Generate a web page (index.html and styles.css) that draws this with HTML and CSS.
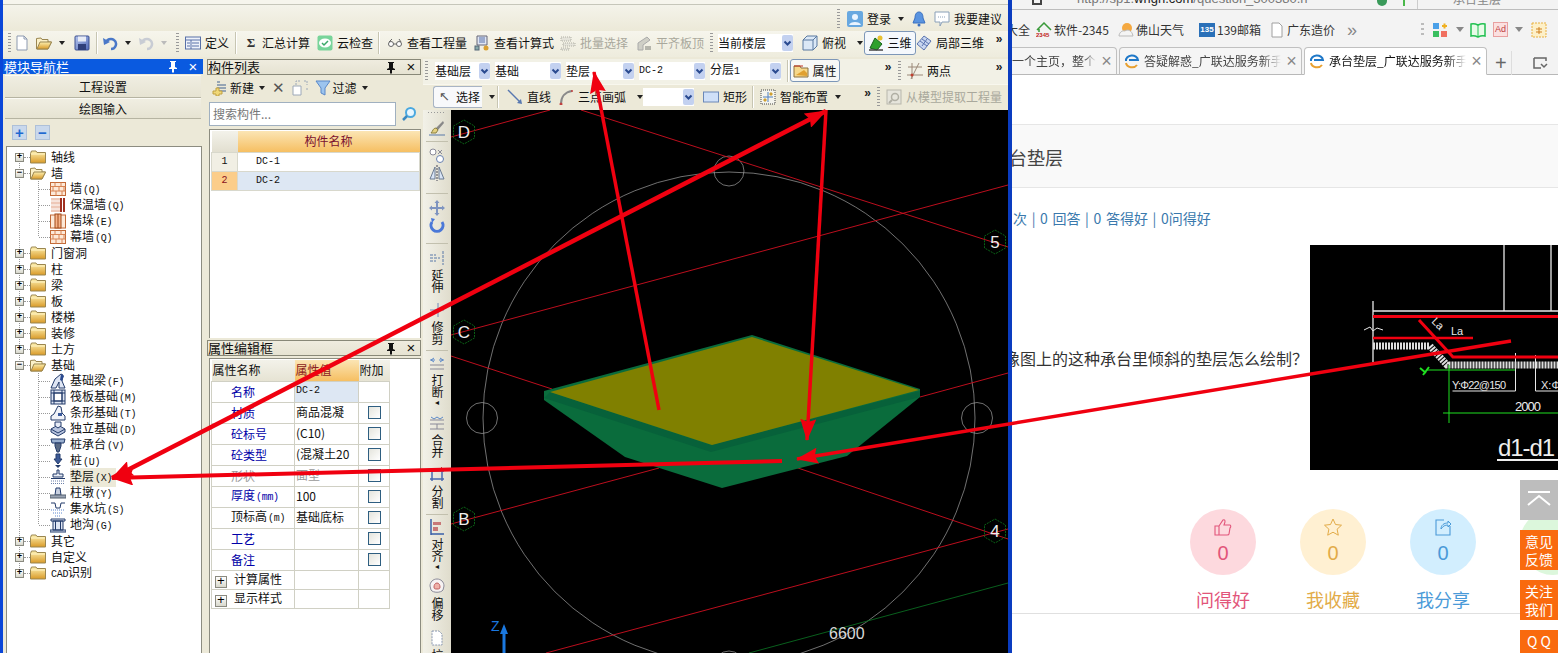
FILE: index.html
```html
<!DOCTYPE html>
<html lang="zh-CN">
<head>
<meta charset="utf-8">
<title>承台垫层</title>
<link rel="stylesheet" href="styles.css">
</head>
<body>
<svg class="sprite" aria-hidden="true">
  <defs>
    <linearGradient id="gf" x1="0" y1="0" x2="0" y2="1"><stop offset="0" stop-color="#fdf0b0"/><stop offset="1" stop-color="#d99a28"/></linearGradient>
    <linearGradient id="gb" x1="0" y1="0" x2="1" y2="1"><stop offset="0" stop-color="#b8c8ee"/><stop offset="1" stop-color="#4f68b8"/></linearGradient>
    <symbol id="pinicon" viewBox="0 0 12 13"><path d="M3 1h6v1H8v5l2 1v1H7v3.500H5V9H2V8l2-1V2H3z" fill="currentColor"/></symbol>
    <symbol id="folder" viewBox="0 0 16 14"><path d="M.5 3.500V13h15V2.500H7L6 1H1.500z" fill="url(#gf)" stroke="#9a8650"/><path d="M1 4h14" stroke="#fff6c8"/></symbol>
    <symbol id="folder-open" viewBox="0 0 16 14"><path d="M.5 2.500V13H12l3.500-7H12V3.500H6L5 2z" fill="#fbf1c8" stroke="#9a8650"/><path d="M1 13l3-7h11.500l-3.500 7z" fill="url(#gf)" stroke="#9a8650"/></symbol>
    <symbol id="wall" viewBox="0 0 16 16"><rect x=".5" y="1.500" width="15" height="13" fill="#fde9d8" stroke="#c26a38"/><path d="M.5 5.500h15M.5 10h15M5 1.500v4M11 1.500v4M3 5.500V10M9 5.500V10M14 5.500V10M6 10v4.500M12 10v4.500" stroke="#d88454" fill="none"/></symbol>
    <symbol id="insul" viewBox="0 0 16 16"><rect x="1" y="1" width="9" height="14" fill="#eec8b8"/><path d="M1 4h9M1 8h9M1 12h9" stroke="#fff"/><rect x="10" y="1" width="5" height="14" fill="#a03020"/><path d="M12.500 1v14" stroke="#fff"/></symbol>
    <symbol id="stub" viewBox="0 0 16 16"><rect x=".5" y="2" width="15" height="13" fill="#fde9d8" stroke="#c26a38"/><rect x="5" y="1" width="6" height="14" fill="#f7b48a" stroke="#a04818"/><path d="M8 1v14" stroke="#a04818"/></symbol>
    <symbol id="beam" viewBox="0 0 16 16"><path d="M1 15l4-9 6-5 2 1-1 6 3 7H9V9l-3 6z" fill="#dfe6f4" stroke="#223a6a"/><path d="M11 1l3 2-2 5-2-1z" fill="#2a4a90"/></symbol>
    <symbol id="raft" viewBox="0 0 16 16"><rect x="1" y="1" width="14" height="14" fill="#dfe6f4" stroke="#223a6a"/><rect x="4" y="4" width="8" height="8" fill="#fff" stroke="#223a6a"/><path d="M1 4h14M1 12h14M4 1v14M12 1v14" stroke="#223a6a"/></symbol>
    <symbol id="strip" viewBox="0 0 16 16"><path d="M1 15V11l3-2 4-8 3 1 1 6 3 3v4z" fill="#f0f2f8" stroke="#223a6a"/><path d="M8 8h4v3H8z" fill="#3a5a9c"/></symbol>
    <symbol id="indep" viewBox="0 0 16 16"><path d="M1 8l7-4 7 4v3l-7 4-7-4z" fill="#b8c4de" stroke="#223a6a"/><path d="M5 5V1h6v4l-3 2z" fill="#e6ebf6" stroke="#223a6a"/><path d="M1 8l7 4 7-4" fill="none" stroke="#223a6a"/></symbol>
    <symbol id="cap" viewBox="0 0 16 16"><path d="M1 2h14l-1 4H2z" fill="#9ab0d0" stroke="#223a6a"/><path d="M5 6h6v3l-2 6H7L5 9z" fill="#5a6a84" stroke="#223a6a"/></symbol>
    <symbol id="pile" viewBox="0 0 16 16"><path d="M6 1h4v5h2l-4 5-4-5h2z" fill="#3d5a96" stroke="#223a6a"/><path d="M5 12h6l-3 3z" fill="#223a6a"/></symbol>
    <symbol id="pad" viewBox="0 0 16 16"><path d="M7 1h2v4h4v3H3V5h4z" fill="#e8ecf4" stroke="#223a6a"/><path d="M1 9.500h14" stroke="#223a6a"/><path d="M1 12h14M1 14.500h14" stroke="#6a7ea8" stroke-dasharray="1 1"/></symbol>
    <symbol id="pier" viewBox="0 0 16 16"><path d="M6 3h4l1 7H5z" fill="#c8d0e0" stroke="#223a6a"/><path d="M0 10h16v3H0z" fill="#9aa4b4" stroke="#55606e"/></symbol>
    <symbol id="sump" viewBox="0 0 16 16"><path d="M1 2h4l1 5h4l1-5h4" fill="none" stroke="#223a6a"/><path d="M1 9l14 0M3 12h10M5 15h6" stroke="#5a86d0" stroke-dasharray="1 1"/></symbol>
    <symbol id="ditch" viewBox="0 0 16 16"><path d="M1 2h14v2H1zM3 4h10v9H3zM0 13h16v2H0z" fill="#dfe6f4" stroke="#223a6a"/><path d="M5.500 4v9M10.500 4v9" stroke="#223a6a"/></symbol>
    <symbol id="chev" viewBox="0 0 11 15"><path d="M2.500 6l3 3 3-3" fill="none" stroke="#2a4a90" stroke-width="2"/></symbol>
    <symbol id="new" viewBox="0 0 16 16"><path d="M3 1h7l3 3v11H3z" fill="#fff" stroke="#8d9ab0"/><path d="M10 1v3h3" fill="none" stroke="#8d9ab0"/></symbol>
    <symbol id="save" viewBox="0 0 16 16"><rect x="1" y="1" width="14" height="14" rx="1" fill="url(#gb)" stroke="#3b4e8e"/><rect x="4" y="1.500" width="8" height="5" fill="#e8ecf6"/><rect x="4" y="9" width="8" height="6" fill="#2f3f7a"/></symbol>
    <symbol id="undo" viewBox="0 0 16 16"><path d="M4 8a5 5 0 0 1 8-3 5 5 0 0 1-3 9" fill="none" stroke="currentColor" stroke-width="2.500"/><path d="M1 3l1 7 6-3z" fill="currentColor"/></symbol>
    <symbol id="def" viewBox="0 0 16 16"><rect x=".5" y="2" width="15" height="12" fill="#eef2fa" stroke="#5870a8"/><path d="M.5 5h15M6 5v9M7 8h7M7 11h7M2 8h3M2 11h3" stroke="#5870a8"/></symbol>
    <symbol id="cloud" viewBox="0 0 16 16"><rect x=".5" y=".5" width="15" height="15" rx="2" fill="#78d49a"/><ellipse cx="8" cy="8" rx="6" ry="4.500" fill="#fff"/><path d="M5 8l2 2 4-4" fill="none" stroke="#3aa868" stroke-width="1.500"/></symbol>
    <symbol id="glasses" viewBox="0 0 16 16"><circle cx="4" cy="9" r="2.500" fill="#fff" stroke="#666"/><circle cx="12" cy="9" r="2.500" fill="#fff" stroke="#666"/><path d="M6.500 9h3M2 7l3-3M14 7l-2-3" fill="none" stroke="#666"/></symbol>
    <symbol id="calc" viewBox="0 0 16 16"><path d="M3 1h10v9H3z" fill="#dfe6f4" stroke="#667"/><path d="M5 3h6M5 5h6M5 7h6" stroke="#5870a8"/><rect x="1" y="11" width="4" height="4" fill="#8aa" stroke="#567"/><circle cx="12" cy="13" r="2.500" fill="#d9a030"/></symbol>
    <symbol id="batch" viewBox="0 0 16 16"><path d="M1 2h10v4H1zM3 8h12v3H3zM1 13h8v2H1z" fill="#e4e3da" stroke="#b0afa4" stroke-dasharray="1 1"/></symbol>
    <symbol id="alignp" viewBox="0 0 16 16"><path d="M2 15V8l9-6 3 3-7 5v5z" fill="#cfcfc6" stroke="#aaa"/><path d="M9 15v-4h6v4z" fill="#b5b5ac"/></symbol>
    <symbol id="cube" viewBox="0 0 16 16"><path d="M1 5l4-4h10v10l-4 4H1z" fill="#dbe8f6" stroke="#5878a0"/><path d="M1 5h10v10M11 5l4-4" fill="none" stroke="#5878a0"/></symbol>
    <symbol id="tri" viewBox="0 0 16 16"><path d="M2 13L7 3l7 6-5 6z" fill="#2ea02e" stroke="#18601a"/><circle cx="12" cy="3" r="2.500" fill="#e8c030"/><path d="M1 15h14" stroke="#444" stroke-width="1.500"/></symbol>
    <symbol id="local3d" viewBox="0 0 16 16"><path d="M1 9l7-8 7 5-7 9z" fill="#c8d6f0" stroke="#5a74b0"/><path d="M4 6l7 5M6 4l7 5M6 11l5-7" stroke="#5a74b0"/></symbol>
    <symbol id="user" viewBox="0 0 16 16"><rect width="16" height="16" rx="2" fill="#68a8e0"/><circle cx="8" cy="6" r="3" fill="#eaf4ff"/><path d="M2 14c1-4 11-4 12 0z" fill="#eaf4ff"/></symbol>
    <symbol id="bell" viewBox="0 0 16 16"><path d="M8 1c3 0 4 3 4 6l2 5H2l2-5c0-3 1-6 4-6z" fill="#5a94e0" stroke="#3a70c0"/><circle cx="8" cy="14" r="1.500" fill="#3a70c0"/></symbol>
    <symbol id="chat" viewBox="0 0 16 16"><path d="M1 1h14v10H8l-2 4v-4H1z" fill="#fff" stroke="#8aa0b8"/><path d="M4 6h8" stroke="#8aa0b8" stroke-dasharray="1 1"/></symbol>
    <symbol id="prop" viewBox="0 0 16 16"><path d="M1 3h6l1 2h7v9H1z" fill="#f6d88a" stroke="#8a7040"/><path d="M3 12l8-5 3 3v3z" fill="#e0a030"/><path d="M1 3h9" stroke="#c03020"/></symbol>
    <symbol id="twopt" viewBox="0 0 16 16"><path d="M0 12h16M1 4h14M5 0v16M12 0L4 16" stroke="#9a8878" fill="none"/><circle cx="5" cy="12" r="1.500" fill="#c04030"/></symbol>
    <symbol id="linei" viewBox="0 0 16 16"><path d="M1 1l12 12" stroke="#5878b0" stroke-width="1.500"/><path d="M15 15l-5-1 4-4z" fill="#5878b0"/></symbol>
    <symbol id="arc" viewBox="0 0 16 16"><path d="M3 15C3 8 7 3 14 2" fill="none" stroke="#8a8a8a" stroke-width="2"/><circle cx="3" cy="15" r="1.500" fill="#c04040"/><circle cx="14" cy="2" r="1" fill="#c04040"/></symbol>
    <symbol id="recti" viewBox="0 0 16 16"><rect x=".5" y="3" width="15" height="10" fill="#cfe0f8" stroke="#6a88b8"/></symbol>
    <symbol id="smart" viewBox="0 0 16 16"><rect x="1" y="1" width="14" height="14" fill="#f4f4ee" stroke="#444" stroke-dasharray="1 1"/><path d="M8 3v10M3 8h10" stroke="#5080c0"/><path d="M11 3l2 2-2 2-2-2zM5 9l2 2-2 2-2-2z" fill="#d0a030"/></symbol>
    <symbol id="extract" viewBox="0 0 16 16"><rect x="1" y="1" width="14" height="14" fill="#e6e5dc" stroke="#b8b7ac"/><circle cx="9" cy="8" r="3.500" fill="none" stroke="#b0afa4" stroke-width="1.500"/><path d="M6 11l-3 3" stroke="#b0afa4" stroke-width="2"/></symbol>
    <symbol id="addi" viewBox="0 0 16 16"><path d="M5 2h3M5 5h9M5 8h9M5 11h9" stroke="#7a8ea8" stroke-width="1.500"/><path d="M4 8v3H1v3h3v2h3v-2h3v-3H7V8z" fill="#f0d878" stroke="#c0a040"/></symbol>
    <symbol id="copy" viewBox="0 0 16 16"><path d="M1 6h8v9H1z" fill="#fff" stroke="#9ca8b8"/><path d="M4 5V1h4M12 1h3v4M15 8v3M4 5" fill="none" stroke="#9ca8b8" stroke-dasharray="2 1"/></symbol>
    <symbol id="filter" viewBox="0 0 16 16"><path d="M1 1h14L10 8v7l-4-2V8z" fill="#9cc4ee" stroke="#5a88c8"/></symbol>
    <symbol id="search" viewBox="0 0 16 16"><circle cx="9.500" cy="6.500" r="4.500" fill="#e8f6ff" stroke="#4aa8e0" stroke-width="2"/><path d="M6 10l-4 4" stroke="#3a88c0" stroke-width="2.500"/></symbol>
    <symbol id="brush" viewBox="0 0 16 16"><path d="M14 1L7 8l2 2 6-7z" fill="#888"/><path d="M7 8c-3 0-3 3-5 5h5l2-3z" fill="#e4d080" stroke="#8a8040"/><path d="M0 15h16" stroke="#5878a8"/></symbol>
    <symbol id="circs" viewBox="0 0 16 16"><circle cx="4" cy="4" r="3" fill="#fff" stroke="#8a8a98"/><circle cx="11" cy="11" r="3.500" fill="#fff" stroke="#6a82b0"/><path d="M9 2l4 4M13 2L9 6" stroke="#8a8a98"/></symbol>
    <symbol id="mirror" viewBox="0 0 16 16"><path d="M6 2L1 14h5zM10 2l5 12h-5z" fill="#d8e4f6" stroke="#6a7a90"/><path d="M8 0v16" stroke="#445" stroke-dasharray="2 1"/></symbol>
    <symbol id="move" viewBox="0 0 16 16"><path d="M8 0l2.500 3H9v4h4V5.500L16 8l-3 2.500V9H9v4h1.500L8 16l-2.500-3H7V9H3v1.500L0 8l3-2.500V7h4V3H5.500z" fill="#7e94c0"/></symbol>
    <symbol id="rot" viewBox="0 0 16 16"><path d="M3 5a6 6 0 1 0 10 0" fill="none" stroke="#4a78d8" stroke-width="3"/><path d="M2 1l4 1-3 4z" fill="#4a78d8"/></symbol>
    <symbol id="ext" viewBox="0 0 16 16"><path d="M14 1v14M1 8h10M1 5h6M1 11h6" stroke="#5878a8" fill="none" stroke-dasharray="3 1"/></symbol>
    <symbol id="trim" viewBox="0 0 16 16"><path d="M9 1v14M1 8h14" stroke="#7088b8" fill="none"/><path d="M1 11h6" stroke="#7088b8"/></symbol>
    <symbol id="brk" viewBox="0 0 16 16"><path d="M1 5h5M10 5h5" stroke="#5a88c8"/><path d="M5 3L2 5l3 2M11 3l3 2-3 2" fill="none" stroke="#5a88c8"/><path d="M1 10h14M1 14h14" stroke="#8a8a98"/></symbol>
    <symbol id="mrg" viewBox="0 0 16 16"><path d="M1 5h14" stroke="#8a8a98"/><path d="M2 2l3 2 3-2M8 2l3 2 3-2" fill="none" stroke="#5a88c8"/><path d="M1 9h14M1 14h14M8 9v5" stroke="#8a8a98"/></symbol>
    <symbol id="spl" viewBox="0 0 16 16"><path d="M1 5h14M1 13h14M3 3v12M13 3v12" stroke="#4a6ab0" stroke-width="1.500"/><path d="M12 1l3 3" stroke="#c04040"/></symbol>
    <symbol id="aln" viewBox="0 0 16 16"><path d="M2 0v16M2 15h13" stroke="#3a60a8" stroke-width="1.500"/><path d="M4 3h8v3H4zM4 8h5v4H4z" fill="#c87878"/></symbol>
    <symbol id="ofs" viewBox="0 0 16 16"><path d="M1 8c0-4 3-7 7-7s7 3 7 7l-1 4c-2 3-10 3-12 0z" fill="#f6f2f2" stroke="#8a8a98"/><path d="M5 9c0-2 1-4 3-4s3 2 3 4-1 2-3 2-3 0-3-2z" fill="#f0b0a8" stroke="#c06060"/></symbol>
    <symbol id="pull" viewBox="0 0 16 16"><path d="M3 1h7l3 3v11H3z" fill="#fff" stroke="#8a98b0" stroke-dasharray="2 1"/></symbol>
  </defs>
</svg>

<div class="app">
  <div class="top-strip"></div>
  <div class="login-bar">
    <span class="grip"></span>
    <span class="tool login"><svg class="ic"><use href="#user"/></svg>登录<span class="drop"></span></span>
    <svg class="ic"><use href="#bell"/></svg>
    <span class="tool"><svg class="ic"><use href="#chat"/></svg>我要建议</span>
  </div>

  <div class="main-tb">
    <span class="grip"></span>
    <svg class="ic"><use href="#new"/></svg>
    <span class="tool p4"><svg class="ic"><use href="#folder-open"/></svg><span class="drop"></span></span>
    <svg class="ic ic-p4"><use href="#save"/></svg>
    <span class="sep"></span>
    <span class="tool p4 blue"><svg class="ic"><use href="#undo"/></svg><span class="drop"></span></span>
    <span class="tool p4 faint"><svg class="ic"><use href="#undo"/></svg><span class="drop pale"></span></span>
    <span class="grip grip-far"></span>
    <span class="tool"><svg class="ic"><use href="#def"/></svg>定义</span>
    <span class="sep"></span>
    <span class="tool p8"><b class="sigma">Σ</b>汇总计算</span>
    <span class="tool p2"><svg class="ic"><use href="#cloud"/></svg>云检查</span>
    <span class="sep"></span>
    <span class="tool p7"><svg class="ic"><use href="#glasses"/></svg>查看工程量</span>
    <span class="tool p2"><svg class="ic"><use href="#calc"/></svg>查看计算式</span>
    <span class="tool dim"><svg class="ic"><use href="#batch"/></svg>批量选择</span>
    <span class="tool dim p1"><svg class="ic"><use href="#alignp"/></svg>平齐板顶</span>
    <span class="grip"></span>
    <span class="combo"><span>当前楼层</span><svg class="chev"><use href="#chev"/></svg></span>
    <span class="tool p4"><svg class="ic"><use href="#cube"/></svg>俯视<span class="drop wide"></span></span>
    <span class="tool pressed"><svg class="ic"><use href="#tri"/></svg>三维</span>
    <span class="tool"><svg class="ic"><use href="#local3d"/></svg>局部三维</span>
    <span class="more">»</span>
  </div>

  <div class="main">
    <aside class="nav">
      <header class="pane-title active"><span>模块导航栏</span><span class="pane-ctl"><svg class="pin"><use href="#pinicon"/></svg><i>×</i></span></header>
      <button class="nav-btn">工程设置</button>
      <button class="nav-btn">绘图输入</button>
      <div class="nav-tools">
        <span class="sq">+</span>
        <span class="sq">−</span>
      </div>
      <div class="tree">
        <ul class="tree-list">
          <li class="node"><span class="exp">+</span><i class="dash"></i><svg class="fld"><use href="#folder"/></svg><span>轴线</span></li>
          <li class="node"><span class="exp">−</span><i class="dash"></i><svg class="fld"><use href="#folder-open"/></svg><span>墙</span></li>
          <li>
            <ul class="kids">
              <li class="leaf"><i class="dash2"></i><svg class="lic"><use href="#wall"/></svg><span>墙<em>(Q)</em></span></li>
              <li class="leaf"><i class="dash2"></i><svg class="lic"><use href="#insul"/></svg><span>保温墙<em>(Q)</em></span></li>
              <li class="leaf"><i class="dash2"></i><svg class="lic"><use href="#stub"/></svg><span>墙垛<em>(E)</em></span></li>
              <li class="leaf"><i class="dash2"></i><svg class="lic"><use href="#wall"/></svg><span>幕墙<em>(Q)</em></span></li>
            </ul>
          </li>
          <li class="node"><span class="exp">+</span><i class="dash"></i><svg class="fld"><use href="#folder"/></svg><span>门窗洞</span></li>
          <li class="node"><span class="exp">+</span><i class="dash"></i><svg class="fld"><use href="#folder"/></svg><span>柱</span></li>
          <li class="node"><span class="exp">+</span><i class="dash"></i><svg class="fld"><use href="#folder"/></svg><span>梁</span></li>
          <li class="node"><span class="exp">+</span><i class="dash"></i><svg class="fld"><use href="#folder"/></svg><span>板</span></li>
          <li class="node"><span class="exp">+</span><i class="dash"></i><svg class="fld"><use href="#folder"/></svg><span>楼梯</span></li>
          <li class="node"><span class="exp">+</span><i class="dash"></i><svg class="fld"><use href="#folder"/></svg><span>装修</span></li>
          <li class="node"><span class="exp">+</span><i class="dash"></i><svg class="fld"><use href="#folder"/></svg><span>土方</span></li>
          <li class="node"><span class="exp">−</span><i class="dash"></i><svg class="fld"><use href="#folder-open"/></svg><span>基础</span></li>
          <li>
            <ul class="kids">
              <li class="leaf"><i class="dash2"></i><svg class="lic"><use href="#beam"/></svg><span>基础梁<em>(F)</em></span></li>
              <li class="leaf"><i class="dash2"></i><svg class="lic"><use href="#raft"/></svg><span>筏板基础<em>(M)</em></span></li>
              <li class="leaf"><i class="dash2"></i><svg class="lic"><use href="#strip"/></svg><span>条形基础<em>(T)</em></span></li>
              <li class="leaf"><i class="dash2"></i><svg class="lic"><use href="#indep"/></svg><span>独立基础<em>(D)</em></span></li>
              <li class="leaf"><i class="dash2"></i><svg class="lic"><use href="#cap"/></svg><span>桩承台<em>(V)</em></span></li>
              <li class="leaf"><i class="dash2"></i><svg class="lic"><use href="#pile"/></svg><span>桩<em>(U)</em></span></li>
              <li class="leaf"><i class="dash2"></i><svg class="lic"><use href="#pad"/></svg><span class="hl">垫层<em>(X)</em></span></li>
              <li class="leaf"><i class="dash2"></i><svg class="lic"><use href="#pier"/></svg><span>柱墩<em>(Y)</em></span></li>
              <li class="leaf"><i class="dash2"></i><svg class="lic"><use href="#sump"/></svg><span>集水坑<em>(S)</em></span></li>
              <li class="leaf"><i class="dash2"></i><svg class="lic"><use href="#ditch"/></svg><span>地沟<em>(G)</em></span></li>
            </ul>
          </li>
          <li class="node"><span class="exp">+</span><i class="dash"></i><svg class="fld"><use href="#folder"/></svg><span>其它</span></li>
          <li class="node"><span class="exp">+</span><i class="dash"></i><svg class="fld"><use href="#folder"/></svg><span>自定义</span></li>
          <li class="node"><span class="exp">+</span><i class="dash"></i><svg class="fld"><use href="#folder"/></svg><span><em class="flat">CAD</em>识别</span></li>
        </ul>
      </div>
    </aside>

    <section class="comps">
      <div class="list-pane">
        <header class="pane-title"><span>构件列表</span><span class="pane-ctl"><svg class="pin"><use href="#pinicon"/></svg><i>×</i></span></header>
        <div class="list-tb">
          <span class="tool"><svg class="ic"><use href="#addi"/></svg>新建<span class="drop"></span></span>
          <span class="xmark">✕</span>
          <svg class="ic"><use href="#copy"/></svg>
          <span class="tool"><svg class="ic"><use href="#filter"/></svg>过滤<span class="drop"></span></span>
        </div>
        <div class="search-row">
          <span class="search-box">搜索构件...</span>
          <svg class="ic ic-search"><use href="#search"/></svg>
        </div>
        <div class="list-body">
          <table class="list-table">
            <tr><th class="corner"></th><th class="hot">构件名称</th></tr>
            <tr><td class="num">1</td><td class="name">DC-1</td></tr>
            <tr class="sel"><td class="num">2</td><td class="name">DC-2</td></tr>
          </table>
        </div>
      </div>
      <div class="prop-pane">
        <header class="pane-title"><span>属性编辑框</span><span class="pane-ctl"><svg class="pin"><use href="#pinicon"/></svg><i>×</i></span></header>
        <div class="prop-body">
          <table class="prop-table">
            <tr><th>属性名称</th><th class="hot">属性值</th><th>附加</th></tr>
            <tr><td class="k">名称</td><td class="v cur lat">DC-2</td><td></td></tr>
            <tr><td class="k">材质</td><td class="v">商品混凝</td><td><span class="chk"></span></td></tr>
            <tr><td class="k">砼标号</td><td class="v">(C10)</td><td><span class="chk"></span></td></tr>
            <tr><td class="k">砼类型</td><td class="v">(混凝土20</td><td><span class="chk"></span></td></tr>
            <tr class="off"><td class="k">形状</td><td class="v">面型</td><td><span class="chk"></span></td></tr>
            <tr><td class="k">厚度<em>(mm)</em></td><td class="v">100</td><td><span class="chk"></span></td></tr>
            <tr><td class="k plain">顶标高<em>(m)</em></td><td class="v">基础底标</td><td><span class="chk"></span></td></tr>
            <tr><td class="k">工艺</td><td class="v"></td><td><span class="chk"></span></td></tr>
            <tr><td class="k">备注</td><td class="v"></td><td><span class="chk"></span></td></tr>
            <tr class="grp"><td class="g"><span class="exp boxed">+</span>计算属性</td><td></td><td></td></tr>
            <tr class="grp"><td class="g"><span class="exp boxed">+</span>显示样式</td><td></td><td></td></tr>
          </table>
        </div>
      </div>
    </section>

    <section class="work">
      <div class="tb-a">
        <span class="grip"></span>
        <span class="combo"><span>基础层</span><svg class="chev"><use href="#chev"/></svg></span>
        <span class="combo"><span>基础</span><svg class="chev"><use href="#chev"/></svg></span>
        <span class="combo"><span>垫层</span><svg class="chev"><use href="#chev"/></svg></span>
        <span class="combo"><span class="lat">DC-2</span><svg class="chev"><use href="#chev"/></svg></span>
        <span class="combo"><span>分层<span class="lat">1</span></span><svg class="chev"><use href="#chev"/></svg></span>
        <span class="sep"></span>
        <span class="tool pressed"><svg class="ic"><use href="#prop"/></svg>属性</span>
        <span></span>
        <span class="more">»</span>
        <span class="grip"></span>
        <span class="tool p2"><svg class="ic"><use href="#twopt"/></svg>两点</span>
        <span class="more">»</span>
      </div>
      <div class="tb-b">
        <span></span>
        <span class="tool"><span class="pick"><span class="cursor">↖</span>选择</span><span class="drop"></span></span>
        <span class="sep"></span>
        <span class="tool p7"><svg class="ic"><use href="#linei"/></svg>直线</span>
        <span class="tool p5"><svg class="ic"><use href="#arc"/></svg>三点画弧<span class="drop wide"></span></span>
        <span class="combo combo-m"><span></span><svg class="chev"><use href="#chev"/></svg></span>
        <span class="tool p4"><svg class="ic"><use href="#recti"/></svg>矩形</span>
        <span class="sep"></span>
        <span class="tool p5"><svg class="ic"><use href="#smart"/></svg>智能布置<span class="drop"></span></span>
        <span></span>
        <span class="more">»</span>
        <span class="grip"></span>
        <span class="tool dim p2"><svg class="ic"><use href="#extract"/></svg>从模型提取工程量</span>
      </div>
      <div class="work-body">
        <div class="vtb">
          <span class="vgrip"></span>
          <span class="vt r18"><svg class="ic"><use href="#brush"/></svg></span>
          <span class="vsep"></span>
          <span class="vt r17"><svg class="ic"><use href="#circs"/></svg></span>
          <span class="vt r25"><svg class="ic"><use href="#mirror"/></svg></span>
          <span class="vsep"></span>
          <span class="vt r17"><svg class="ic"><use href="#move"/></svg></span>
          <span class="vt r23"><svg class="ic"><use href="#rot"/></svg></span>
          <span class="vsep"></span>
          <span class="vt r52"><svg class="ic"><use href="#ext"/></svg><b>延伸</b></span>
          <span class="vt r47"><svg class="ic"><use href="#trim"/></svg><b>修剪</b></span>
          <span class="vsep short"></span>
          <span class="vt r60"><svg class="ic"><use href="#brk"/></svg><b>打断</b><s>◂</s></span>
          <span class="vt r51"><svg class="ic"><use href="#mrg"/></svg><b>合并</b></span>
          <span class="vt r47"><svg class="ic"><use href="#spl"/></svg><b>分割</b></span>
          <span class="vsep short"></span>
          <span class="vt r59"><svg class="ic"><use href="#aln"/></svg><b>对齐</b><s>◂</s></span>
          <span class="vt r52"><svg class="ic"><use href="#ofs"/></svg><b>偏移</b></span>
          <span class="vt r52"><svg class="ic"><use href="#pull"/></svg><b>拉</b></span>
        </div>
        <svg class="canvas" viewBox="451 110 557 543">
          <rect x="451" y="110" width="557" height="543" fill="#000"/>
          <g fill="none" stroke="#a0a0a0" stroke-width=".7">
            <circle cx="729" cy="418" r="246"/>
            <circle cx="729" cy="171" r="15"/>
            <circle cx="482" cy="418" r="15.500"/>
            <circle cx="977" cy="418" r="15.500"/>
            <circle cx="729" cy="666" r="15"/>
          </g>
          <g stroke="#d01020" stroke-width=".9">
            <line x1="451" y1="137" x2="550" y2="110"/>
            <line x1="581" y1="110" x2="1008" y2="247"/>
            <line x1="451" y1="335" x2="1008" y2="185"/>
            <line x1="451" y1="356" x2="552" y2="389"/>
            <line x1="789" y1="465" x2="1008" y2="539"/>
            <line x1="920" y1="397" x2="1008" y2="373"/>
            <line x1="451" y1="524" x2="659" y2="468"/>
            <line x1="546" y1="653" x2="1008" y2="529"/>
          </g>
          <line x1="749" y1="653" x2="1008" y2="583" stroke="#0a6a20" stroke-width=".9"/>
          <polygon points="544,391 752,335 920,389 920,397 847,456 722,488 625,457 544,400" fill="#0a6c3c"/>
          <polygon points="544,398 711,452 920,397 920,391 711,445 550,392" fill="#07613a"/>
          <polygon points="550,392 752,337 919,390 712,445" fill="#808000"/>
          <g class="axis">
            <g transform="translate(464 132)"><polygon points="0,-12 10.500,-6 10.500,6 0,12 -10.500,6 -10.500,-6"/><text y="6">D</text></g>
            <g transform="translate(464 332)"><polygon points="0,-12 10.500,-6 10.500,6 0,12 -10.500,6 -10.500,-6"/><text y="6">C</text></g>
            <g transform="translate(464 519)"><polygon points="0,-12 10.500,-6 10.500,6 0,12 -10.500,6 -10.500,-6"/><text y="6">B</text></g>
            <g transform="translate(995 242)"><polygon points="0,-12 10.500,-6 10.500,6 0,12 -10.500,6 -10.500,-6"/><text y="6">5</text></g>
            <g transform="translate(995 531)"><polygon points="0,-12 10.500,-6 10.500,6 0,12 -10.500,6 -10.500,-6"/><text y="6">4</text></g>
          </g>
          <text class="dim6600" x="829" y="639">6600</text>
          <text class="zlab" x="491" y="631">Z</text>
          <path d="M504 624l4 10h-2.500v19h-3v-19H500z" fill="#1a78e0"/>
        </svg>
      </div>
    </section>
  </div>
</div>

<div class="browser">
  <div class="addr">
    <span class="addr-back"></span>
    <span class="addr-url">http://sp1.<b>wrigh.com</b>/question_300380.h</span>
    <span class="addr-go"></span>
    <span class="addr-arrow"></span>
    <span class="addr-sep"></span>
    <span class="addr-search">承台垫层</span>
  </div>
  <div class="bookmarks">
    <span class="bm bm-clip">大全</span>
    <span class="bm"><svg class="bi" viewBox="0 0 16 16"><path d="M1 8l7-7 7 7M3 7v3" fill="none" stroke="#3a9a3a" stroke-width="1.500"/><text x="0" y="15" class="bi-t">2345</text></svg>软件-2345</span>
    <span class="bm"><svg class="bi" viewBox="0 0 16 16"><circle cx="9" cy="6" r="5" fill="#f4a840"/><path d="M1 14c0-3 3-6 6-5 2-2 7-1 8 5z" fill="#f4f4f4" stroke="#bbb"/></svg>佛山天气</span>
    <span class="bm"><b class="logo139">135</b>139邮箱</span>
    <span class="bm"><svg class="bi" viewBox="0 0 16 16"><path d="M3 1h7l3 3v11H3z" fill="#fff" stroke="#a0a0a0"/></svg>广东造价</span>
    <span class="bm-more">»</span>
    <span class="bm-grip"></span>
    <svg class="bi" viewBox="0 0 16 16"><rect x="1" y="1" width="6" height="6" fill="#4aa0e8"/><rect x="1" y="9" width="6" height="6" fill="#3abf60"/><rect x="9" y="9" width="6" height="6" fill="#f07060"/><path d="M10 4h5M12.500 1.500v5" stroke="#f0b020" stroke-width="2"/></svg>
    <span class="drop grey"></span>
    <svg class="bi" viewBox="0 0 16 16"><path d="M1 2c3-1 5 0 7 1 2-1 4-2 7-1v12c-3-1-5 0-7 1-2-1-4-2-7-1z" fill="#e8fbe8" stroke="#20c050" stroke-width="1.500"/><path d="M8 3v12" stroke="#20c050"/></svg>
    <span class="adbox">Ad</span>
    <span class="drop grey"></span>
    <svg class="bi" viewBox="0 0 16 16"><rect x="1" y="1" width="14" height="14" fill="#fdf0c8" stroke="#e8b040" stroke-dasharray="2 1"/><path d="M5 7h6M5 10h6M8 5v7" stroke="#d08020"/></svg>
  </div>
  <div class="tabs">
    <span class="tab t0"><span class="tab-text">一个主页，整个</span><span class="tab-x">×</span></span>
    <span class="tab"><svg class="ie" viewBox="0 0 16 16"><path d="M2 8a6 5 0 0 1 12-1H5" fill="none" stroke="#1f78c8" stroke-width="2"/><path d="M2 10a6 5 0 0 0 11 2" fill="none" stroke="#e8a030" stroke-width="2"/></svg><span class="tab-text">答疑解惑_广联达服务新手</span><span class="tab-x">×</span></span>
    <span class="tab act"><svg class="ie" viewBox="0 0 16 16"><path d="M2 8a6 5 0 0 1 12-1H5" fill="none" stroke="#1f78c8" stroke-width="2"/><path d="M2 10a6 5 0 0 0 11 2" fill="none" stroke="#e8a030" stroke-width="2"/></svg><span class="tab-text">承台垫层_广联达服务新手</span><span class="tab-x">×</span></span>
    <span class="tab-plus">+</span>
    <span class="tab-tools"><svg class="bi" viewBox="0 0 16 16"><path d="M1 3h12v3M1 3v10h7" fill="none" stroke="#666" stroke-width="1.500"/><path d="M8 9l3 3 3-3" fill="none" stroke="#666" stroke-width="1.500"/></svg><svg class="bi" viewBox="0 0 16 16"><path d="M8 1h7v14H8z" fill="none" stroke="#666" stroke-width="1.500"/></svg></span>
  </div>
  <div class="page">
    <div class="q-title"><h1>台垫层</h1></div>
    <div class="q-stats">次 | 0 回答 | 0 答得好 | 0问得好</div>
    <div class="q-body">
      <p>像图上的这种承台里倾斜的垫层怎么绘制？</p>
      <svg class="cad" viewBox="1310 245 248 225">
        <rect x="1310" y="245" width="248" height="225" fill="#000"/>
        <g fill="none" stroke="#e8e8e8">
          <path d="M1373 311h185M1504 245v66M1551 245v66M1373 301v61" stroke-width="1.300"/>
          <path d="M1515.500 353v38h-63M1535.500 355v36h23"/>
          <path d="M1364 330l6-3 3 4 4-3 6 2"/>
        </g>
        <path d="M1373 346h57l17 19h111" fill="none" stroke="#ddd" stroke-width="7" stroke-dasharray="2 1"/>
        <g fill="none" stroke="#f00010" stroke-width="3">
          <path d="M1373 316.500h185"/>
          <path d="M1419 320l34 37h105"/>
          <path d="M1373 338h100" stroke-width="2.500"/>
        </g>
        <g fill="none" stroke="#1fe020">
          <path d="M1427 370h88M1449 365v58M1443 413h115"/>
          <path d="M1423 375l6-8M1420 368l6 5" stroke-width="2"/>
        </g>
        <text class="cad-s" x="1452" y="389" textLength="54">Y:Φ22@150</text>
        <text class="cad-s" x="1541" y="389">X:Φ</text>
        <text class="cad-s" x="1451" y="335">La</text>
        <text class="cad-s" transform="translate(1431 322) rotate(45)">La</text>
        <text class="cad-n" x="1515" y="411" textLength="26">2000</text>
        <text class="cad-t" x="1498" y="456" textLength="57">d1-d1</text>
        <path d="M1497 460h61" stroke="#eee" stroke-width="2"/>
      </svg>
    </div>
    <div class="actions">
      <div class="act-col good">
        <div class="act-circle"><svg class="act-ic" viewBox="0 0 18 18"><path d="M1 8h4v9H1zM5 8l4-6c2-1 2 1 2 2l-1 3h6c1 0 1 2 0 3l-1 6c0 1-1 1-2 1H5" fill="none" stroke="currentColor" stroke-width="1.100"/></svg><span>0</span></div>
        <span class="act-label">问得好</span>
      </div>
      <div class="act-col fav">
        <div class="act-circle"><svg class="act-ic" viewBox="0 0 18 18"><path d="M9 1l2.500 5.500 6 .7-4.400 4 1.200 6L9 14.200 3.700 17.200l1.200-6-4.400-4 6-.7z" fill="none" stroke="currentColor" stroke-width="1"/></svg><span>0</span></div>
        <span class="act-label">我收藏</span>
      </div>
      <div class="act-col share">
        <div class="act-circle"><svg class="act-ic" viewBox="0 0 18 18"><path d="M10 2H2v15h14V8" fill="none" stroke="currentColor" stroke-width="1.100"/><path d="M7 11c0-4 3-6 7-6V3l3 3-3 3V7c-3 0-5 1-7 4z" fill="none" stroke="currentColor"/></svg><span>0</span></div>
        <span class="act-label">我分享</span>
      </div>
      <div class="act-col mint"><div class="act-circle"></div></div>
    </div>
    <div class="side">
      <span class="to-top"><svg viewBox="0 0 38 40" class="to-top-ic"><path d="M8 12h22M8 25l11-9 11 9" fill="none" stroke="#fff" stroke-width="2"/></svg></span>
      <span class="side-b">意见<br>反馈</span>
      <span class="side-b">关注<br>我们</span>
      <span class="side-b">Q Q<br>咨询</span>
    </div>
  </div>
</div>

<svg class="notes" viewBox="0 0 1558 653">
  <defs>
    <marker id="ah" markerUnits="userSpaceOnUse" markerWidth="22" markerHeight="16" viewBox="0 0 22 16" refX="21" refY="8" orient="auto-start-reverse"><path d="M0 0l22 8-22 8 3-8z" fill="#f00010"/></marker>
  </defs>
  <g fill="none" stroke="#f00010">
    <line x1="659" y1="410" x2="594" y2="72" stroke-width="3.500" marker-end="url(#ah)"/>
    <line x1="826" y1="110" x2="807" y2="440" stroke-width="3.500" marker-end="url(#ah)"/>
    <line x1="112" y1="478" x2="826" y2="111" stroke-width="4.500" marker-start="url(#ah)" marker-end="url(#ah)"/>
    <line x1="782" y1="461" x2="112" y2="478" stroke-width="4" marker-end="url(#ah)"/>
    <line x1="1511" y1="341" x2="797" y2="459" stroke-width="3.500" marker-end="url(#ah)"/>
  </g>
</svg>
</body>
</html>
```

FILE: styles.css
```css
* { box-sizing: border-box; }
html, body { margin: 0; padding: 0; }
body {
  width: 1558px;
  height: 653px;
  overflow: hidden;
  display: flex;
  position: relative;
  background: #fff;
  font: 12px/16px "Noto Sans CJK SC", "Liberation Sans", sans-serif;
  color: #111;
}
ul { list-style: none; margin: 0; padding: 0; }
.sprite { position: absolute; width: 0; height: 0; }

/* ---------- desktop app window ---------- */
.app {
  flex: none;
  width: 1012px;
  height: 653px;
  display: flex;
  flex-direction: column;
  background: #ece9d8;
  border-left: 3px solid #0a46d8;
  border-right: 4px solid #0a3cc0;
  position: relative;
  z-index: 1;
}
.top-strip { height: 5px; background: #f6f5ed; border-bottom: 1px solid #c6c6ba; }
.login-bar {
  height: 26px;
  display: flex;
  justify-content: flex-end;
  align-items: center;
  gap: 7px;
  padding: 2px 6px 0 0;
  background: linear-gradient(#f4f3ea, #ece9d8);
}
.login { gap: 3px; }
.main-tb {
  height: 26px;
  display: grid;
  grid-template-columns: 8px 18px 38px 26px 2px 36px 36px 15px 50px 2px 78px 63px 2px 92px 88px 75px 73px 10px 80px 62px 56px 74px 18px;
  align-items: center;
  padding: 0 0 2px 3px;
  background: linear-gradient(#f6f5ec, #eeecdd);
}
.main { flex: 1; min-height: 0; display: flex; margin-top: 2px; }

.tool { display: flex; align-items: center; gap: 4px; white-space: nowrap; height: 22px; }
.ic { width: 16px; height: 16px; flex: none; }
.ic-p4 { margin-left: 4px; }
.p1 { padding-left: 1px; }
.p2 { padding-left: 2px; }
.p4 { padding-left: 4px; }
.p5 { padding-left: 5px; }
.p7 { padding-left: 7px; }
.p8 { padding-left: 8px; }
.dim { color: #a9a89c; }
.blue { color: #4a78c8; }
.faint { color: #c8ccd4; }
.sigma { width: 12px; font: bold 13px/16px "Liberation Serif", serif; color: #333; text-align: center; margin-right: 1px; }
.drop { width: 0; height: 0; margin-left: 3px; border: 3px solid transparent; border-top: 4px solid #222; border-bottom: 0; }
.drop.wide { margin-left: 7px; }
.drop.pale { border-top-color: #bbb; }
.drop.grey { border-top-color: #888; border-left-width: 4px; border-right-width: 4px; border-top-width: 5px; margin: 0; }
.grip {
  width: 3px;
  height: 20px;
  margin-left: 2px;
  background: repeating-linear-gradient(#999 0 1px, transparent 1px 3px);
}
.grip-far { margin-left: 6px; }
.sep { height: 22px; background: #c7c5b2; border-right: 1px solid #fff; justify-self: center; width: 2px; }
.more { font: bold 12px/12px "Liberation Sans", sans-serif; color: #222; align-self: start; margin-top: 2px; text-align: center; }
.pressed {
  justify-content: center;
  height: 24px;
  background: #f5f8fc;
  border: 1px solid #7d97b8;
  border-radius: 3px;
  margin-left: 4px;
  gap: 3px;
}
.combo {
  display: flex;
  justify-content: space-between;
  align-items: center;
  height: 18px;
  background: #fff;
  margin-right: 5px;
  white-space: nowrap;
}
.combo-m { margin-left: 3px; }
.chev { width: 11px; height: 16px; background: #c3d1f0; border-radius: 2px; }
.lat, em { font: 10px/16px "Liberation Mono", monospace; }
em { margin-left: 1px; font-style: normal; letter-spacing: -.3px; }
em.flat { margin: 0; }

/* panes */
.pane-title {
  height: 16px;
  display: flex;
  justify-content: space-between;
  align-items: center;
  background: linear-gradient(#efecdf, #e6e3d2);
  border: 1px solid #888878;
  font-size: 13px;
  line-height: 14px;
  padding: 0 1px 0 0;
}
.pane-title.active { background: #0a5ae0; border-color: #0a5ae0; color: #fff; height: 15px; }
.pane-ctl { display: flex; align-items: center; gap: 8px; padding-right: 2px; font: 15px/14px "Liberation Sans", sans-serif; }
.pane-ctl i { font-style: normal; width: 12px; text-align: center; }
.pin { width: 12px; height: 13px; flex: none; }

.nav { width: 200px; margin-right: 4px; display: flex; flex-direction: column; }
.nav-btn {
  height: 23px;
  font: inherit;
  color: #111;
  background: linear-gradient(#f0eee2, #e6e3d2);
  border: 0;
  border-top: 1px solid #fbfaf4;
  border-bottom: 1px solid #b6b4a2;
  margin: 1px 0 0 2px;
  width: 196px;
  padding: 0;
}
.nav-btn + .nav-btn { height: 21px; margin-top: 0; }
.nav-tools { height: 27px; display: flex; align-items: center; gap: 8px; padding-left: 9px; }
.sq {
  width: 15px;
  height: 15px;
  background: #c9d8ec;
  border: 1px solid #aec0d8;
  color: #1f68d0;
  font: bold 15px/13px "Liberation Sans", sans-serif;
  text-align: center;
}
.tree {
  flex: 1;
  margin-left: 3px;
  width: 196px;
  background: #fff;
  border: 1px solid #8c8c80;
  border-bottom: 0;
  padding-top: 2px;
}
.tree-list {
  background: repeating-linear-gradient(#999 0 1px, transparent 1px 2px) 12px 8px / 1px calc(100% - 16px) no-repeat;
}
.node { height: 16px; display: flex; align-items: center; padding-left: 8px; }
.exp {
  width: 9px;
  height: 9px;
  flex: none;
  background: linear-gradient(#fff, #d8d8cc);
  border: 1px solid #8a8a80;
  font: bold 9px/7px "Liberation Mono", monospace;
  text-align: center;
  color: #000;
}
.dash { width: 6px; flex: none; border-top: 1px dotted #999; }
.fld { width: 16px; height: 14px; flex: none; margin-right: 5px; }
.kids {
  padding-left: 32px;
  background: repeating-linear-gradient(#999 0 1px, transparent 1px 2px) 31px 0 / 1px calc(100% - 8px) no-repeat;
}
.leaf { height: 16px; display: flex; align-items: center; }
.dash2 { width: 11px; flex: none; border-top: 1px dotted #999; }
.lic { width: 16px; height: 16px; flex: none; margin-right: 4px; }
.hl { background: #ece9d8; padding-right: 4px; }

.comps { width: 214px; margin-right: 2px; display: flex; flex-direction: column; gap: 2px; }
.list-pane { height: 279px; display: flex; flex-direction: column; }
.prop-pane { flex: 1; min-height: 0; display: flex; flex-direction: column; }
.list-tb { height: 26px; display: flex; align-items: center; gap: 7px; padding-left: 5px; background: #ece9d8; }
.list-tb .tool { gap: 2px; }
.xmark { font: 15px/16px "DejaVu Sans", sans-serif; color: #555; }
.search-row { height: 26px; display: flex; align-items: center; gap: 5px; padding-left: 2px; }
.search-box {
  width: 187px;
  height: 24px;
  background: #fff;
  border: 1px solid #a0b0c0;
  color: #777;
  padding: 3px;
  line-height: 16px;
}
.list-body { flex: 1; margin: 2px 0 0 2px; background: #fff; border: 1px solid #8c8c80; border-bottom: 0; padding: 1px; }
.list-table { width: 209px; border-collapse: collapse; }
.list-table th { height: 21px; font-weight: 400; }
.corner { width: 26px; background: linear-gradient(#f3f2ea, #e2dfd0); }
.hot { background: linear-gradient(#fbe5b4, #f6bf62); color: #7a1030; }
.list-table td { height: 19px; border: 1px solid #d8d8cc; }
.num { background: #f1efe4; text-align: center; font: 10px/16px "Liberation Mono", monospace; }
.name { padding-left: 18px; font: 10px/16px "Liberation Mono", monospace; }
.sel td { background: #dde7f3; }
.sel .num { background: #fbcd8a; color: #8a1020; }

.prop-body { flex: 1; margin: 2px 0 0 2px; background: #fff; border: 1px solid #8c8c80; border-bottom: 0; padding: 1px; }
.prop-table { width: 179px; border-collapse: collapse; table-layout: fixed; }
.prop-table th { height: 21px; font-weight: 400; text-align: left; padding-left: 1px; background: linear-gradient(#f3f2ea, #e6e3d3); }
.prop-table th:nth-child(1) { width: 83px; }
.prop-table th:nth-child(2) { width: 64px; }
.prop-table th.hot { background: linear-gradient(#fbe5b4, #f6bf62); color: #8a2020; }
.prop-table td { height: 21px; border: 1px solid #d0d0c4; padding: 0; }
.prop-table .k { padding-left: 19px; color: #0000a8; }
.prop-table .k.plain { color: #111; }
.prop-table .off .k, .prop-table .off .v { color: #999; }
.prop-table .v { padding-left: 1px; vertical-align: top; line-height: 17px; }
.prop-table .v.cur { background: #dde7f3; }
.prop-table td:last-child { text-align: center; line-height: 0; }
.chk { display: inline-block; width: 13px; height: 13px; border: 1px solid #2e5e80; background: linear-gradient(135deg, #e4e4dc, #fff); }
.grp td { height: 19px; }
.prop-table .g { padding-left: 3px; }
.boxed { display: inline-block; width: 12px; height: 12px; margin-right: 7px; font: 13px/10px "Liberation Mono", monospace; vertical-align: -1px; }

.work { width: 585px; display: flex; flex-direction: column; min-height: 0; }
.tb-a, .tb-b { display: grid; align-items: center; background: #ece9d8; padding-bottom: 2px; }
.tb-a { height: 25px; grid-template-columns: 12px 60px 71px 73px 71px 76px 4px 50px 40px 16px 9px 85px 18px; background: #f2f1e6; }
.tb-b { height: 26px; grid-template-columns: 10px 62px 5px 53px 87px 59px 51px 5px 85px 20px 15px 9px 124px; border-top: 1px solid #f8f7ee; }
.tb-a .pressed { margin-left: 0; height: 23px; background: #f7f8f6; }
.pick {
  display: flex;
  align-items: center;
  gap: 6px;
  width: 49px;
  height: 22px;
  padding-left: 5px;
  background: #f8f9fb;
  border: 1px solid #a8b4c4;
  border-right: 0;
  border-radius: 3px 0 0 3px;
}
.cursor { font: 13px/16px "DejaVu Sans", sans-serif; color: #555; }
.work-body { flex: 1; min-height: 0; display: flex; }
.vtb {
  width: 28px;
  flex: none;
  display: flex;
  flex-direction: column;
  align-items: center;
  background: linear-gradient(90deg, #f2f1e8, #dfdccc);
  overflow: hidden;
}
.vgrip { flex: none; width: 18px; height: 8px; background: repeating-linear-gradient(90deg, #999 0 1px, transparent 1px 3px) 0 2px / 100% 1px no-repeat; }
.vsep { flex: none; width: 22px; height: 10px; background: linear-gradient(#c2c0ae, #c2c0ae) 0 50% / 100% 1px no-repeat; }
.vsep.short { height: 6px; }
.vt { flex: none; display: flex; flex-direction: column; align-items: center; gap: 3px; padding-top: 2px; }
.vt b { font-weight: 400; writing-mode: vertical-rl; text-orientation: upright; font-size: 12px; line-height: 14px; }
.vt s { text-decoration: none; font: 8px/6px "DejaVu Sans", sans-serif; margin-top: -1px; }
.r17 { height: 17px; } .r18 { height: 18px; } .r23 { height: 23px; } .r25 { height: 25px; }
.r47 { height: 47px; } .r51 { height: 51px; } .r52 { height: 52px; } .r59 { height: 59px; } .r60 { height: 60px; }
.canvas { width: 557px; height: 543px; flex: none; display: block; }
.axis polygon { fill: none; stroke: #0c7a1c; stroke-width: .8; stroke-dasharray: 2 1; }
.axis text { fill: #eee; font: 17px "Liberation Sans", sans-serif; text-anchor: middle; }
.dim6600 { fill: #d8d8d8; font: 16px "Liberation Sans", sans-serif; }
.zlab { fill: #1a78e0; font: 14px "Liberation Sans", sans-serif; }

/* ---------- browser behind ---------- */
.browser { flex: 1; min-width: 0; position: relative; overflow: hidden; display: flex; flex-direction: column; }
.addr {
  height: 10px;
  flex: none;
  display: flex;
  overflow: hidden;
  background: #f3f3f3;
  border-bottom: 1px solid #bdbdbd;
  font: 13px/16px "Liberation Sans", sans-serif;
  color: #777;
}
.addr b { color: #222; font-weight: 400; }
.addr-back { flex: none; width: 10px; height: 5px; margin-left: 20px; border: 2px solid #444; border-top: 0; }
.addr-url { flex: none; margin: -9px 0 0 35px; width: 292px; white-space: nowrap; overflow: hidden; }
.addr-go { flex: none; width: 10px; height: 6px; margin-left: 8px; background: #3a9a5a; border-radius: 0 0 5px 5px; }
.addr-arrow { flex: none; width: 8px; height: 6px; margin-left: 10px; border-right: 2px solid #4ab84a; }
.addr-sep { flex: none; width: 1px; height: 9px; margin-left: 12px; background: #ccc; }
.addr-search { flex: none; margin: -9px 0 0 35px; color: #888; font: 12px/16px "Noto Sans CJK SC", sans-serif; }
.bookmarks {
  height: 37px;
  flex: none;
  display: grid;
  grid-template-columns: 24px 82px 81px 70px 76px 75px 12px 24px 14px 21px 24px 16px 27px;
  align-items: center;
  background: #f3f3f3;
  color: #333;
  padding-top: 2px;
}
.bm { display: flex; align-items: center; gap: 2px; white-space: nowrap; }
.bm-clip { justify-self: end; margin-right: 6px; }
.bi { width: 16px; height: 16px; flex: none; }
.bi-t { font: bold 6px "Liberation Sans", sans-serif; fill: #c02020; }
.logo139 { flex: none; width: 16px; background: #2a70b8; color: #fff; font: bold 8px/14px "Liberation Sans", sans-serif; text-align: center; }
.bm-more { font: 18px/16px "Liberation Sans", sans-serif; color: #888; padding-left: 2px; }
.bm-grip { width: 3px; height: 14px; margin-left: 1px; background: repeating-linear-gradient(#bbb 0 2px, transparent 2px 5px); }
.adbox { width: 15px; height: 15px; margin-left: 2px; background: #fbe0e0; border: 1px solid #e8a0a0; color: #c04040; font: 9px/13px "Liberation Sans", sans-serif; text-align: center; }
.tabs {
  height: 28px;
  flex: none;
  display: flex;
  align-items: flex-end;
  gap: 2px;
  background: linear-gradient(#f3f3f3 0 27px, #b8b8b8 27px);
}
.tab {
  flex: none;
  width: 183px;
  height: 28px;
  display: flex;
  align-items: center;
  gap: 4px;
  padding: 0 3px 0 4px;
  background: #f5f5f5;
  border: 1px solid #c0c0c0;
  border-bottom: 1px solid #b8b8b8;
  border-radius: 4px 4px 0 0;
  color: #444;
}
.t0 { width: 117px; margin-left: -12px; padding-left: 11px; }
.act { background: #fff; border-bottom-color: #fff; color: #111; }
.ie { width: 16px; height: 16px; flex: none; }
.tab-text {
  flex: 1;
  min-width: 0;
  white-space: nowrap;
  overflow: hidden;
  -webkit-mask-image: linear-gradient(90deg, #000 86%, transparent);
  mask-image: linear-gradient(90deg, #000 86%, transparent);
}
.tab-x { flex: none; font: 18px/16px "Liberation Sans", sans-serif; color: #888; width: 13px; text-align: center; }
.tab-plus { flex: none; font: 20px/24px "Liberation Sans", sans-serif; color: #666; margin-left: 6px; width: 17px; height: 24px; border-right: 1px solid #ddd; }
.tab-tools { flex: none; display: flex; gap: 4px; margin-left: 19px; height: 24px; align-items: center; }

.page { flex: 1; min-height: 0; background: #fff; display: flex; flex-direction: column; }
.q-title {
  margin-top: 49px;
  height: 64px;
  display: flex;
  align-items: center;
  background: #f9f9f9;
  border-top: 1px solid #e6e6e6;
  border-bottom: 1px solid #e6e6e6;
  flex: none;
}
.q-title h1 { margin: 1px 0 0 -3px; font: 400 18px/22px "Noto Sans CJK SC", sans-serif; color: #444; }
.q-stats { height: 57px; padding: 20px 0 0 1px; font-size: 14px; line-height: 20px; color: #3a79ad; flex: none; word-spacing: 1.500px; }
.q-body { height: 225px; flex: none; display: flex; justify-content: flex-end; align-items: center; gap: 2px; overflow: hidden; }
.q-body p { margin: 0; font-size: 16px; line-height: 22px; color: #333; white-space: nowrap; flex: none; }
.cad { width: 248px; height: 225px; flex: none; display: block; }
.cad-s { fill: #e8e8e8; font: 11px "Liberation Sans", sans-serif; }
.cad-n { fill: #eee; font: 13px "Liberation Sans", sans-serif; }
.cad-t { fill: #eee; font: 24px "Liberation Sans", sans-serif; }
.actions {
  height: 144px;
  width: 700px;
  flex: none;
  display: flex;
  gap: 44px;
  padding: 39px 0 0 178px;
  background: linear-gradient(#e0e0e0, #e0e0e0) 0 100% / 546px 1px no-repeat;
}
.act-col { width: 66px; flex: none; display: flex; flex-direction: column; align-items: center; gap: 12px; }
.act-circle { flex: none; width: 66px; height: 66px; border-radius: 50%; display: flex; flex-direction: column; align-items: center; gap: 5px; padding-top: 9px; font: 20px/24px "Liberation Sans", sans-serif; }
.act-ic { flex: none; width: 18px; height: 18px; display: block; }
.act-label { font-size: 18px; line-height: 24px; white-space: nowrap; }
.good { color: #e2557a; } .good .act-circle { background: #fdd9de; }
.fav { color: #e2ab48; } .fav .act-circle { background: #fff0d2; }
.share { color: #4a9ad8; } .share .act-circle { background: #d2eefe; }
.mint .act-circle { background: #dcf7dc; }
.side {
  position: absolute;
  top: 480px;
  right: 0;
  width: 38px;
  display: flex;
  flex-direction: column;
  gap: 10px;
}
.to-top { height: 40px; background: #bdbdbd; display: block; }
.to-top-ic { width: 38px; height: 40px; display: block; }
.side-b { height: 40px; background: #f96a0e; color: #fff; font-size: 14px; line-height: 18px; text-align: center; padding-top: 2px; flex: none; }

/* annotation arrows over the whole shot */
.notes { position: absolute; left: 0; top: 0; width: 1558px; height: 653px; z-index: 2; pointer-events: none; }
```
